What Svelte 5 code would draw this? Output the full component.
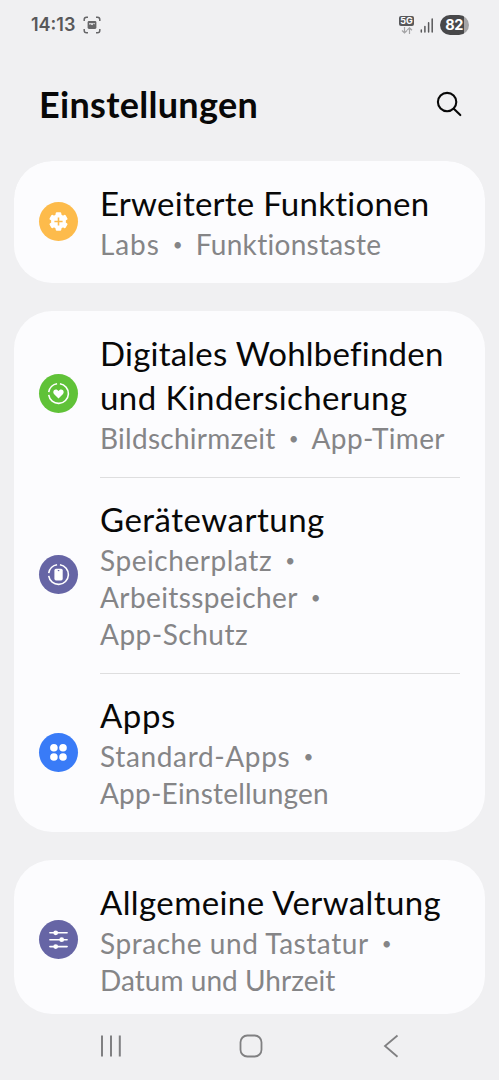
<script lang="ts">
    type Label = { text: string; spacing: number };
    type Item = {
        icon: string;
        color: string;
        title: Label[];
        // each row is a list of labels, a null stands for the bullet
        summary: (Label | null)[][];
    };

    const groups: Item[][] = [
        [
            {
                icon: "advanced",
                color: "#fdbb4b",
                title: [{ text: "Erweiterte Funktionen", spacing: 0.25 }],
                summary: [
                    [{ text: "Labs", spacing: 0.9 }, null, { text: "Funktionstaste", spacing: 0.3 }],
                ],
            },
        ],
        [
            {
                icon: "wellbeing",
                color: "#60c238",
                title: [
                    { text: "Digitales Wohlbefinden", spacing: 0.22 },
                    { text: "und Kindersicherung", spacing: 0.42 },
                ],
                summary: [
                    [{ text: "Bildschirmzeit", spacing: 0.27 }, null, { text: "App-Timer", spacing: 0.35 }],
                ],
            },
            {
                icon: "care",
                color: "#6665a5",
                title: [{ text: "Gerätewartung", spacing: 0.5 }],
                summary: [
                    [{ text: "Speicherplatz", spacing: 0.57 }, null],
                    [{ text: "Arbeitsspeicher", spacing: 0.4 }, null],
                    [{ text: "App-Schutz", spacing: 0.5 }],
                ],
            },
            {
                icon: "apps",
                color: "#397bf7",
                title: [{ text: "Apps", spacing: 0.6 }],
                summary: [
                    [{ text: "Standard-Apps", spacing: 0.65 }, null],
                    [{ text: "App-Einstellungen", spacing: 0.22 }],
                ],
            },
        ],
        [
            {
                icon: "general",
                color: "#6665a5",
                title: [{ text: "Allgemeine Verwaltung", spacing: 0.4 }],
                summary: [
                    [{ text: "Sprache und Tastatur", spacing: 0.55 }, null],
                    [{ text: "Datum und Uhrzeit", spacing: 0.04 }],
                ],
            },
        ],
    ];
</script>

<div class="screen">
    <div class="status-bar">
        <span class="clock">14:13</span>
        <svg class="capture" width="18" height="18" viewBox="0 0 18 18" fill="none" stroke="#666668" stroke-width="1.5">
            <path d="M1.2 5V3.5Q1.2 1.2 3.5 1.2H5M13 1.2h1.5q2.3 0 2.3 2.3V5M16.8 13v1.5q0 2.3-2.3 2.3H13M5 16.8H3.5q-2.3 0-2.3-2.3V13" />
            <rect x="4.6" y="5.1" width="8.8" height="7.8" rx="1.4" fill="#666668" stroke="none" />
            <path d="M6 8.6V7.2h6v1.2l-1.1-.8-1.8 1.6-1.4-1z" fill="#f0f0f2" stroke="none" />
        </svg>
        <div class="network">
            <span class="network-type">5G</span>
            <svg width="12" height="7" viewBox="0 0 12 7" fill="none" stroke="#a4a4a6" stroke-width="1.2">
                <path d="M3.5 0v5.8M1 3.5l2.5 2.5L6 3.5M8.5 7V1M6.2 3.2 8.5.9l2.5 2.3" />
            </svg>
        </div>
        <svg class="signal" width="14" height="15" viewBox="0 0 14 15" stroke="#58585a" stroke-width="1.5">
            <path d="M1.3 12V14M4.9 8.5V14M8.6 4.8V14M12.2 1v13" stroke-linecap="round" />
        </svg>
        <span class="battery">82</span>
    </div>

    <header>
        <h1>Einstellungen</h1>
        <svg width="28" height="28" viewBox="0 0 28 28" fill="none" stroke="#080808" stroke-width="2.1" stroke-linecap="round">
            <circle cx="12.1" cy="12.1" r="9.2" />
            <path d="m18.8 18.8 6.5 6.3" />
        </svg>
    </header>

    <main>
        {#each groups as group}
            <section class="card">
                {#each group as item}
                    <div class="item">
                        <div class="item-icon" style="background: {item.color};">
                            <svg width="39" height="39" viewBox="0 0 39 39" fill="none" stroke="#fff" stroke-width="1.6">
                                {#if item.icon === "advanced"}
                                    <circle cx="19.5" cy="19.5" r="7.4" fill="#fff" stroke="none" />
                                    {#each [0, 60, 120] as angle}
                                        <rect
                                            x="16.7"
                                            y="10.2"
                                            width="5.6"
                                            height="18.6"
                                            rx="1.2"
                                            fill="#fff"
                                            stroke="none"
                                            transform="rotate({angle} 19.5 19.5)"
                                        />
                                    {/each}
                                    <path d="M19.5 15.4v8.2M15.4 19.5h8.2" stroke={item.color} stroke-width="1.6" />
                                {:else if item.icon === "wellbeing" || item.icon === "care"}
                                    <path d="M20.9 9.7A9.9 9.9 0 1 1 9.7 20.9M9.7 18.1A9.9 9.9 0 0 1 18.1 9.7" />
                                    {#if item.icon === "wellbeing"}
                                        <path
                                            d="M19.5 24.6 15.2 20.2c-1.7-1.8-.8-4.7 1.6-4.7 1.2 0 2.1.6 2.7 1.5.6-.9 1.5-1.5 2.7-1.5 2.4 0 3.3 2.9 1.6 4.7z"
                                            fill="#fff"
                                            stroke="none"
                                        />
                                    {:else}
                                        <rect x="15.4" y="13.8" width="8.3" height="11.6" rx="1.6" fill="#fff" stroke="none" />
                                        <path d="M18.8 15.6h1.5" stroke={item.color} stroke-width="1.1" />
                                    {/if}
                                {:else if item.icon === "apps"}
                                    <g fill="#fff" stroke="none">
                                        <circle cx="14.9" cy="14.8" r="3.8" />
                                        <circle cx="24" cy="14.8" r="3.8" />
                                        <circle cx="14.9" cy="24" r="3.8" />
                                        <circle cx="24" cy="24" r="3.8" />
                                    </g>
                                {:else}
                                    <path d="M10.9 12.8h17.2M10.9 19.7h17.2M10.9 26.6h17.2" stroke-linecap="round" />
                                    <g fill="#fff" stroke="none">
                                        <circle cx="16.7" cy="12.8" r="2.4" />
                                        <circle cx="22.7" cy="19.7" r="2.4" />
                                        <circle cx="16.7" cy="26.6" r="2.4" />
                                    </g>
                                {/if}
                            </svg>
                        </div>
                        <div class="item-text">
                            {#each item.title as line}
                                <div class="title" style="letter-spacing: {line.spacing}px;">{line.text}</div>
                            {/each}
                            {#each item.summary as row}
                                <div class="summary">
                                    {#each row as label}
                                        {#if label}
                                            <span style="letter-spacing: {label.spacing}px;">{label.text}</span>
                                        {:else}
                                            <span class="bullet">•</span>
                                        {/if}
                                    {/each}
                                </div>
                            {/each}
                        </div>
                    </div>
                {/each}
            </section>
        {/each}
    </main>

    <nav>
        <svg width="24" height="24" viewBox="0 0 24 24" stroke="#808082" stroke-width="2">
            <path d="M3 1.5v21M12 1.5v21M20.8 1.5v21" />
        </svg>
        <svg width="24" height="24" viewBox="0 0 24 24" fill="none" stroke="#808082" stroke-width="1.8">
            <rect x="1.5" y="1.5" width="21" height="21" rx="6.8" />
        </svg>
        <svg width="24" height="24" viewBox="0 0 24 24" fill="none" stroke="#808082" stroke-width="1.8">
            <path d="M18.5 1.5 6 12l12.5 10.7" />
        </svg>
    </nav>
</div>

<style>
    :global(body) {
        margin: 0;
        background: #f0f0f2;
    }

    .screen {
        display: flex;
        flex-direction: column;
        width: 499px;
        height: 1080px;
        overflow: hidden;
        background: #f0f0f2;
        font-family: Lato, "Open Sans", sans-serif;
    }

    .status-bar {
        display: flex;
        align-items: center;
        height: 50px;
        padding: 0 30px 0 31px;
        box-sizing: border-box;
        color: #58585a;
    }

    .clock {
        font-family: Inter, sans-serif;
        font-size: 18px;
        font-weight: 600;
        line-height: 50px;
    }

    .capture {
        margin-left: 8px;
    }

    .network {
        display: flex;
        flex-direction: column;
        align-items: center;
        gap: 1px;
        margin: 0 6px 0 auto;
        padding-bottom: 1px;
    }

    .network-type {
        width: 15px;
        height: 10px;
        border-radius: 2px;
        background: #58585a;
        color: #fff;
        font-family: Inter, sans-serif;
        font-size: 9px;
        font-weight: 700;
        line-height: 10px;
        text-align: center;
    }

    .signal {
        margin-right: 6px;
    }

    .battery {
        width: 29px;
        height: 20px;
        padding-right: 1px;
        box-sizing: border-box;
        border-radius: 10px;
        background: linear-gradient(to right, #48484a 82%, #a5a5a7 82%);
        color: #fff;
        font-family: Inter, sans-serif;
        font-size: 14.5px;
        font-weight: 700;
        letter-spacing: -0.5px;
        line-height: 20px;
        text-align: center;
    }

    header {
        display: flex;
        align-items: center;
        justify-content: space-between;
        height: 111px;
        padding: 0 36px 3px 39px;
        box-sizing: border-box;
    }

    h1 {
        margin: 0;
        color: #080808;
        font-size: 36px;
        font-weight: 700;
        letter-spacing: 0.3px;
        line-height: 44px;
    }

    main {
        display: flex;
        flex-direction: column;
        gap: 28px;
        height: 853px;
        flex-shrink: 0;
        margin: 0 14px;
        border-radius: 38px;
        overflow: hidden;
    }

    .card {
        flex-shrink: 0;
        border-radius: 38px;
        background: #fcfcfe;
    }

    .item {
        display: flex;
        align-items: center;
        gap: 22px;
        padding: 0 25px;
    }

    .item-icon {
        flex-shrink: 0;
        width: 39px;
        height: 39px;
        margin-bottom: 1px;
        border-radius: 50%;
    }

    .item-icon svg {
        display: block;
    }

    .item-text {
        flex: 1;
        padding: 20px 0;
        white-space: nowrap;
    }

    .item + .item .item-text {
        box-shadow: inset 0 1px #dededf;
    }

    .title {
        color: #080808;
        font-size: 33px;
        line-height: 44px;
    }

    .summary {
        display: flex;
        align-items: center;
        height: 37px;
        color: #858587;
        font-size: 28px;
        line-height: 37px;
    }

    .title + .summary {
        margin-top: 1px;
    }

    .bullet {
        width: 36px;
        font-size: 17px;
        text-align: center;
    }

    nav {
        display: flex;
        justify-content: space-between;
        align-items: center;
        flex: 1;
        padding: 0 96px 2px 99px;
    }
</style>
